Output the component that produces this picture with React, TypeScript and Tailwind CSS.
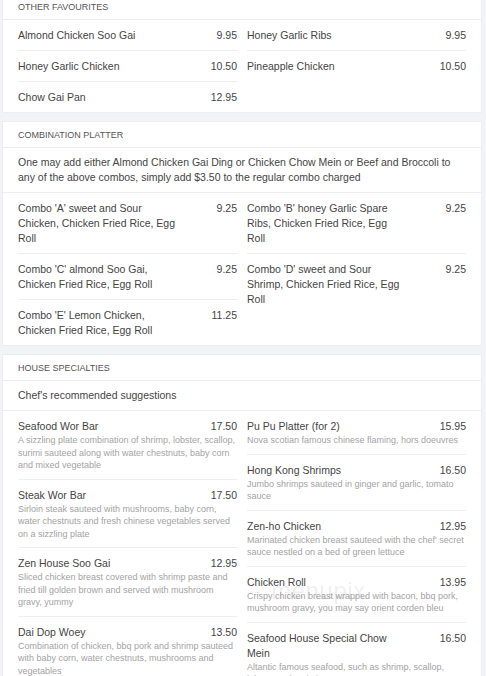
import React from 'react';

type Item = { name: string; price: string; desc?: string };

const favouritesLeft: Item[] = [
  { name: 'Almond Chicken Soo Gai', price: '9.95' },
  { name: 'Honey Garlic Chicken', price: '10.50' },
  { name: 'Chow Gai Pan', price: '12.95' },
];

const favouritesRight: Item[] = [
  { name: 'Honey Garlic Ribs', price: '9.95' },
  { name: 'Pineapple Chicken', price: '10.50' },
];

const combosLeft: Item[] = [
  { name: "Combo 'A' sweet and Sour Chicken, Chicken Fried Rice, Egg Roll", price: '9.25' },
  { name: "Combo 'C' almond Soo Gai, Chicken Fried Rice, Egg Roll", price: '9.25' },
  { name: "Combo 'E' Lemon Chicken, Chicken Fried Rice, Egg Roll", price: '11.25' },
];

const combosRight: Item[] = [
  { name: "Combo 'B' honey Garlic Spare Ribs, Chicken Fried Rice, Egg Roll", price: '9.25' },
  { name: "Combo 'D' sweet and Sour Shrimp, Chicken Fried Rice, Egg Roll", price: '9.25' },
];

const houseLeft: Item[] = [
  {
    name: 'Seafood Wor Bar',
    price: '17.50',
    desc: 'A sizzling plate combination of shrimp, lobster, scallop, surimi sauteed along with water chestnuts, baby corn and mixed vegetable',
  },
  {
    name: 'Steak Wor Bar',
    price: '17.50',
    desc: 'Sirloin steak sauteed with mushrooms, baby corn, water chestnuts and fresh chinese vegetables served on a sizzling plate',
  },
  {
    name: 'Zen House Soo Gai',
    price: '12.95',
    desc: 'Sliced chicken breast covered with shrimp paste and fried till golden brown and served with mushroom gravy, yummy',
  },
  {
    name: 'Dai Dop Woey',
    price: '13.50',
    desc: 'Combination of chicken, bbq pork and shrimp sauteed with baby corn, water chestnuts, mushrooms and vegetables',
  },
];

const houseRight: Item[] = [
  { name: 'Pu Pu Platter (for 2)', price: '15.95', desc: 'Nova scotian famous chinese flaming, hors doeuvres' },
  { name: 'Hong Kong Shrimps', price: '16.50', desc: 'Jumbo shrimps sauteed in ginger and garlic, tomato sauce' },
  {
    name: 'Zen-ho Chicken',
    price: '12.95',
    desc: "Marinated chicken breast sauteed with the chef' secret sauce nestled on a bed of green lettuce",
  },
  {
    name: 'Chicken Roll',
    price: '13.95',
    desc: 'Crispy chicken breast wrapped with bacon, bbq pork, mushroom gravy, you may say orient corden bleu',
  },
  {
    name: 'Seafood House Special Chow Mein',
    price: '16.50',
    desc: 'Altantic famous seafood, such as shrimp, scallop, lobster and surimi',
  },
];

function Column({ items }: { items: Item[] }) {
  return (
    <div className="flex flex-col divide-y divide-[#eeeeee]">
      {items.map((item) => (
        <div key={item.name} className="pt-2 pb-[7px]">
          <div className="flex text-[10.5px] leading-[15px] text-[#444]">
            <span className="w-[160px]">{item.name}</span>
            <span className="flex-1 text-right">{item.price}</span>
          </div>
          {item.desc && (
            <p className="text-[9px] leading-[12.5px] text-[#a3a3a3]">{item.desc}</p>
          )}
        </div>
      ))}
    </div>
  );
}

function Card({ title, children }: { title: string; children: React.ReactNode }) {
  return (
    <section className="relative bg-white border border-[#eceef2]">
      <h2 className="px-[15px] pt-2 pb-[6px] text-[9px] leading-[11px] uppercase text-[#555] border-b border-[#eeeeee]">
        {title}
      </h2>
      {children}
    </section>
  );
}

export default function App() {
  return (
    <div
      className="min-h-screen bg-[#f2f3f6] pl-[2px] pr-[4px] overflow-hidden"
      style={{ fontFamily: '"Liberation Sans", Arial, sans-serif' }}
    >
      <div className="-mt-[7px] flex flex-col gap-2">
        {/* Other favourites */}
        <Card title="Other Favourites">
          <div className="grid grid-cols-2 gap-[10px] px-[15px] items-start">
            <Column items={favouritesLeft} />
            <Column items={favouritesRight} />
          </div>
        </Card>

        {/* Combination platter */}
        <Card title="Combination Platter">
          <p className="px-[15px] py-[7px] text-[10.5px] leading-[15px] text-[#444] border-b border-[#eeeeee]">
            One may add either Almond Chicken Gai Ding or Chicken Chow Mein or Beef and Broccoli to any of the above
            combos, simply add $3.50 to the regular combo charged
          </p>
          <div className="grid grid-cols-2 gap-[10px] px-[15px] items-start">
            <Column items={combosLeft} />
            <Column items={combosRight} />
          </div>
        </Card>

        {/* House specialties */}
        <Card title="House Specialties">
          <p className="px-[15px] py-[7px] text-[10.5px] leading-[15px] text-[#444] border-b border-[#eeeeee]">
            Chef's recommended suggestions
          </p>
          <div className="grid grid-cols-2 gap-[10px] px-[15px] items-start">
            <Column items={houseLeft} />
            <Column items={houseRight} />
          </div>
          <span className="absolute left-[268px] top-[218px] text-[24px] tracking-wide text-black/[0.08] pointer-events-none">
            menupix
          </span>
        </Card>
      </div>
    </div>
  );
}
